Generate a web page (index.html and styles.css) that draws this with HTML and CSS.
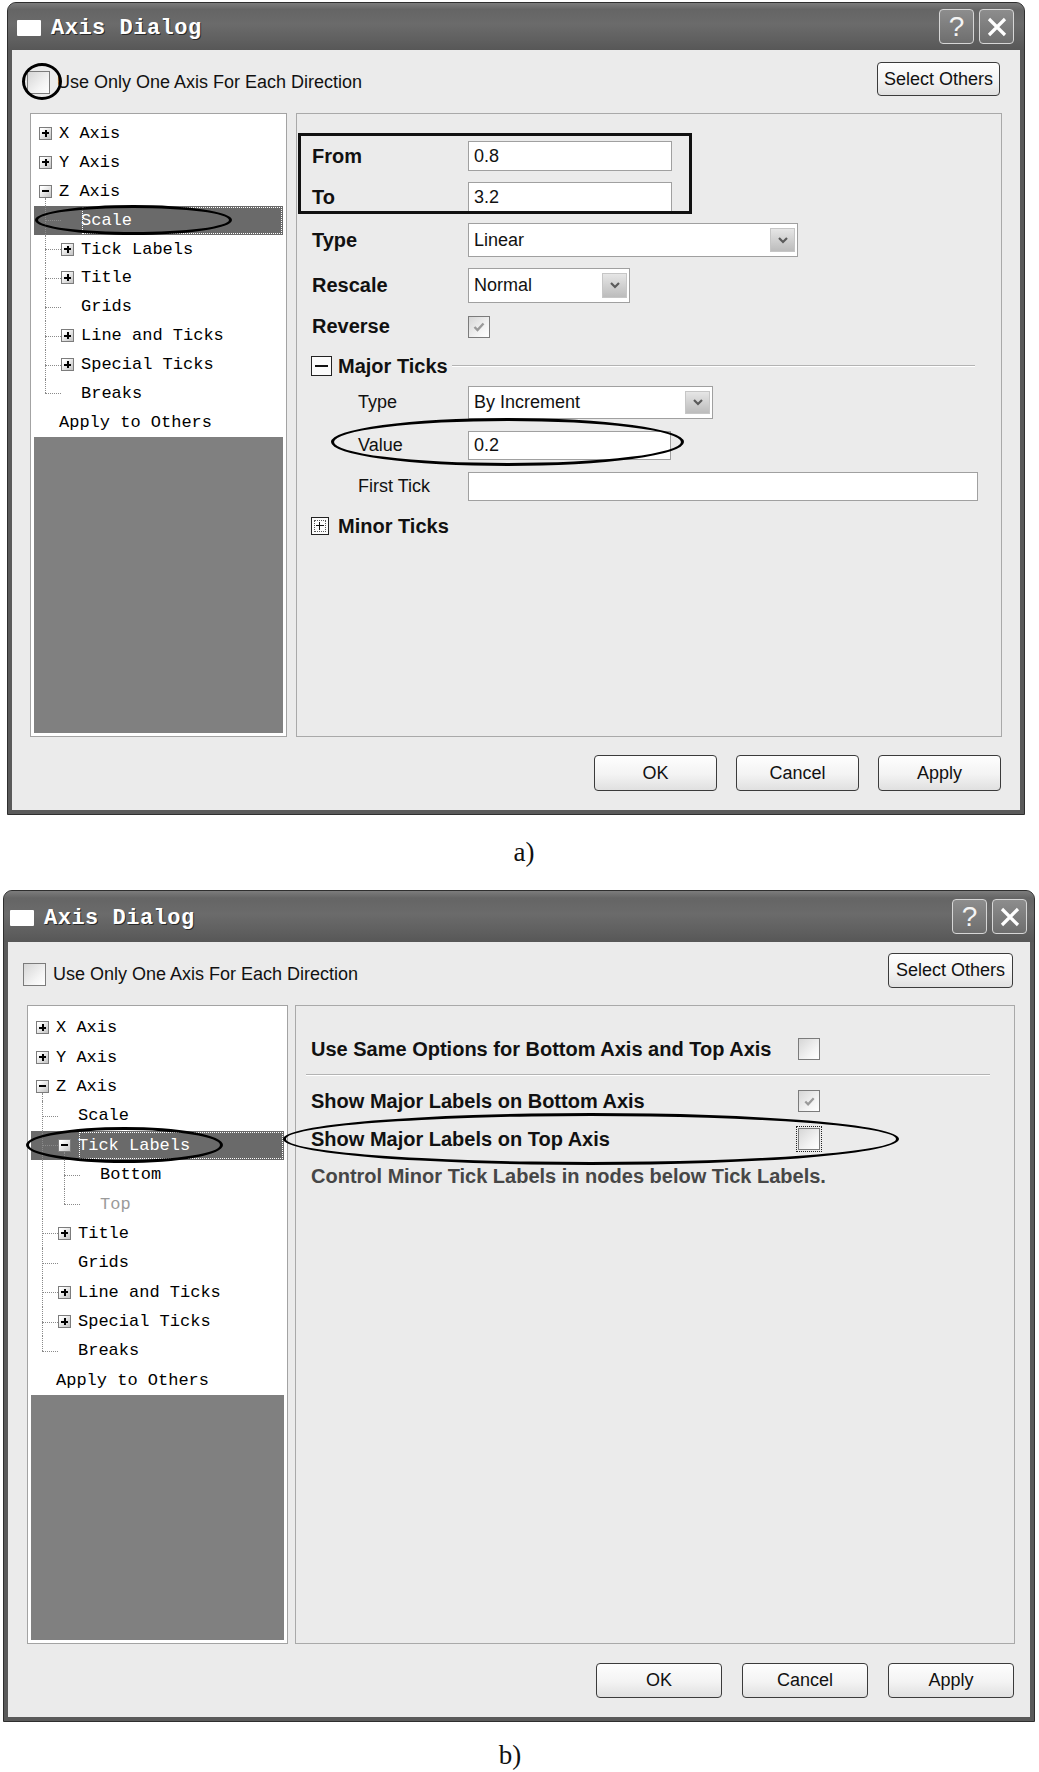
FILE: index.html
```html
<!DOCTYPE html>
<html lang="en">
<head>
    <meta charset="UTF-8">
    <meta name="viewport" content="width=device-width, initial-scale=1.0">
    <title>Axis Dialog</title>
    <link rel="stylesheet" href="styles.css">
</head>
<body>
<div class="figure">

    <!-- a) Scale page -->
    <div class="dialog dialog-a">
        <div class="titlebar">
            <span class="app-icon"></span>
            <span class="title">Axis Dialog</span>
            <div class="caption-buttons">
                <span class="cap-btn">?</span>
                <span class="cap-btn"><svg width="22" height="22" viewBox="0 0 22 22"><path d="M3 3 L19 19 M19 3 L3 19" stroke="#fff" stroke-width="3.2" fill="none"/></svg></span>
            </div>
        </div>
        <div class="client">
            <div class="top-row">
                <div class="check-label"><span class="checkbox"></span>Use Only One Axis For Each Direction</div>
                <button class="btn select-others">Select Others</button>
                <span class="mark circle-a"></span>
            </div>
            <div class="main">
                <div class="tree">
                    <div class="node l0"><span class="tg plus"></span>X Axis</div>
                    <div class="node l0"><span class="tg plus"></span>Y Axis</div>
                    <div class="node l0 open"><span class="tg minus"></span>Z Axis</div>
                    <div class="node l1 selected"><span class="tg none"></span><span class="txt">Scale</span></div>
                    <div class="node l1"><span class="tg plus"></span>Tick Labels</div>
                    <div class="node l1"><span class="tg plus"></span>Title</div>
                    <div class="node l1"><span class="tg none"></span>Grids</div>
                    <div class="node l1"><span class="tg plus"></span>Line and Ticks</div>
                    <div class="node l1"><span class="tg plus"></span>Special Ticks</div>
                    <div class="node l1 end"><span class="tg none"></span>Breaks</div>
                    <div class="node l0"><span class="tg none"></span>Apply to Others</div>
                    <div class="tree-fill"></div>
                    <span class="mark ellipse-scale"></span>
                </div>
                <div class="panel">
                    <div class="form">
                        <div class="row">
                            <span class="lbl">From</span>
                            <div class="field w-from">0.8</div>
                        </div>
                        <div class="row r-to">
                            <span class="lbl">To</span>
                            <div class="field w-from">3.2</div>
                        </div>
                        <div class="row r-type">
                            <span class="lbl">Type</span>
                            <div class="field select w-type">Linear<span class="drop"><svg width="12" height="9" viewBox="0 0 12 9"><path d="M2 2 L6 6 L10 2" stroke="#5a5a5a" stroke-width="2.2" fill="none"/></svg></span></div>
                        </div>
                        <div class="row r-rescale">
                            <span class="lbl">Rescale</span>
                            <div class="field select w-rescale">Normal<span class="drop"><svg width="12" height="9" viewBox="0 0 12 9"><path d="M2 2 L6 6 L10 2" stroke="#5a5a5a" stroke-width="2.2" fill="none"/></svg></span></div>
                        </div>
                        <div class="row r-reverse">
                            <span class="lbl">Reverse</span>
                            <span class="checkbox"><svg width="16" height="16" viewBox="0 0 16 16"><path d="M3.5 8 L6.5 11 L12.5 4.5" stroke="#9a9a9a" stroke-width="2.4" fill="none"/></svg></span>
                        </div>
                        <div class="group-head">
                            <span class="gbox minus"></span>
                            <span class="gtitle">Major Ticks</span>
                            <span class="gline"></span>
                        </div>
                        <div class="row sub r-subtype">
                            <span class="lbl">Type</span>
                            <div class="field select w-subtype">By Increment<span class="drop"><svg width="12" height="9" viewBox="0 0 12 9"><path d="M2 2 L6 6 L10 2" stroke="#5a5a5a" stroke-width="2.2" fill="none"/></svg></span></div>
                        </div>
                        <div class="row sub r-value">
                            <span class="lbl">Value</span>
                            <div class="field w-value">0.2</div>
                        </div>
                        <div class="row sub r-first">
                            <span class="lbl">First Tick</span>
                            <div class="field w-first"></div>
                        </div>
                        <div class="group-head minor-head">
                            <span class="gbox small plus"></span>
                            <span class="gtitle">Minor Ticks</span>
                        </div>
                    </div>
                    <span class="rect-mark"></span>
                    <span class="mark ellipse-value"></span>
                </div>
            </div>
            <div class="footer">
                <button class="btn">OK</button>
                <button class="btn">Cancel</button>
                <button class="btn">Apply</button>
            </div>
        </div>
    </div>
    <div class="fig-caption cap-a">a)</div>

    <!-- b) Tick Labels page -->
    <div class="dialog dialog-b">
        <div class="titlebar">
            <span class="app-icon"></span>
            <span class="title">Axis Dialog</span>
            <div class="caption-buttons">
                <span class="cap-btn">?</span>
                <span class="cap-btn"><svg width="22" height="22" viewBox="0 0 22 22"><path d="M3 3 L19 19 M19 3 L3 19" stroke="#fff" stroke-width="3.2" fill="none"/></svg></span>
            </div>
        </div>
        <div class="client">
            <div class="top-row">
                <div class="check-label"><span class="checkbox"></span>Use Only One Axis For Each Direction</div>
                <button class="btn select-others">Select Others</button>
            </div>
            <div class="main">
                <div class="tree">
                    <div class="node l0"><span class="tg plus"></span>X Axis</div>
                    <div class="node l0"><span class="tg plus"></span>Y Axis</div>
                    <div class="node l0 open"><span class="tg minus"></span>Z Axis</div>
                    <div class="node l1"><span class="tg none"></span>Scale</div>
                    <div class="node l1 open selected"><span class="tg minus"></span><span class="txt">Tick Labels</span></div>
                    <div class="node l2"><i class="rail"></i><span class="tg none"></span>Bottom</div>
                    <div class="node l2 end"><i class="rail"></i><span class="tg none"></span><span class="dim">Top</span></div>
                    <div class="node l1"><span class="tg plus"></span>Title</div>
                    <div class="node l1"><span class="tg none"></span>Grids</div>
                    <div class="node l1"><span class="tg plus"></span>Line and Ticks</div>
                    <div class="node l1"><span class="tg plus"></span>Special Ticks</div>
                    <div class="node l1 end"><span class="tg none"></span>Breaks</div>
                    <div class="node l0"><span class="tg none"></span>Apply to Others</div>
                    <div class="tree-fill"></div>
                    <span class="mark ellipse-tick"></span>
                </div>
                <div class="panel">
                    <div class="opts">
                        <div class="opt-row">
                            <span class="opt-lbl">Use Same Options for Bottom Axis and Top Axis</span>
                            <span class="checkbox small"></span>
                        </div>
                        <div class="sep"></div>
                        <div class="opt-row r-bottom">
                            <span class="opt-lbl">Show Major Labels on Bottom Axis</span>
                            <span class="checkbox small"><svg width="15" height="15" viewBox="0 0 16 16"><path d="M3.5 8 L6.5 11 L12.5 4.5" stroke="#9a9a9a" stroke-width="2.4" fill="none"/></svg></span>
                        </div>
                        <div class="opt-row r-top">
                            <span class="opt-lbl">Show Major Labels on Top Axis</span>
                            <span class="checkbox small focus"></span>
                        </div>
                        <div class="opt-row info">Control Minor Tick Labels in nodes below Tick Labels.</div>
                    </div>
                    <span class="mark ellipse-top"></span>
                </div>
            </div>
            <div class="footer">
                <button class="btn">OK</button>
                <button class="btn">Cancel</button>
                <button class="btn">Apply</button>
            </div>
        </div>
    </div>
    <div class="fig-caption cap-b">b)</div>

</div>
</body>
</html>
```

FILE: styles.css
```css
* {
    box-sizing: border-box;
}

body {
    margin: 0;
    background-color: #fff;
    font-family: "Liberation Sans", Arial, sans-serif;
    font-size: 18px;
    color: #111;
}

.figure {
    width: 1039px;
}

/* window frame */
.dialog {
    position: relative;
    border: 1px solid #2e2e2e;
    border-radius: 9px 9px 0 0;
    background-color: #5a5a5a;
    padding: 0 4px 4px;
}

.dialog-a {
    width: 1018px;
    margin: 2px 0 0 7px;
}

.dialog-b {
    width: 1032px;
    margin: 0 0 0 3px;
}

.titlebar {
    display: flex;
    align-items: center;
    margin: 0 -4px;
    border-radius: 8px 8px 0 0;
    background: linear-gradient(#7c7c7c, #656565 14%, #6b6b6b 45%, #5f5f5f 80%, #575757);
}

.dialog-a .titlebar {
    height: 47px;
    padding: 0 10px 0 9px;
}

.dialog-b .titlebar {
    height: 51px;
    padding: 0 7px 0 6px;
}

.app-icon {
    width: 24px;
    height: 16px;
    background-color: #fff;
    border-radius: 1px;
    margin-top: 2px;
}

.title {
    margin-left: 10px;
    margin-top: 4px;
    font-family: "Liberation Mono", monospace;
    font-weight: bold;
    font-size: 22px;
    letter-spacing: 0.5px;
    color: #fff;
    text-shadow: 1px 1px 0 #2a2a2a;
}

.caption-buttons {
    margin-left: auto;
    display: flex;
    gap: 5px;
}

.cap-btn {
    width: 35px;
    height: 35px;
    border: 1px solid #d6d6d6;
    border-radius: 4px;
    background: linear-gradient(#8d8d8d, #6e6e6e);
    display: flex;
    align-items: center;
    justify-content: center;
    color: #f4f4f4;
    font-size: 28px;
}

.client {
    background-color: #ebebeb;
}

.dialog-a .client {
    padding: 12px 18px 19px;
}

.dialog-b .client {
    padding: 11px 15px 19px 19px;
}

.top-row {
    position: relative;
    display: flex;
    align-items: center;
    justify-content: space-between;
}

.dialog-a .top-row {
    height: 34px;
    margin: 0 2px 0 -3px;
}

.dialog-b .top-row {
    height: 35px;
    margin: 0 2px 0 -4px;
}

.check-label {
    display: flex;
    align-items: center;
    gap: 7px;
    margin-top: 7px;
}

.checkbox {
    width: 23px;
    height: 23px;
    flex: none;
    border: 1px solid #7b7b7b;
    background: linear-gradient(135deg, #d6d6d6, #f4f4f4 65%, #fff);
    display: flex;
    align-items: center;
    justify-content: center;
}

.checkbox.small {
    width: 22px;
    height: 22px;
}

.checkbox.focus {
    outline: 1px dotted #222;
    outline-offset: 1px;
}

.btn {
    font-family: "Liberation Sans", Arial, sans-serif;
    font-size: 18px;
    color: #111;
    background: linear-gradient(#fefefe, #f3f3f3 55%, #e0e0e0);
    border: 1px solid #3b3b3b;
    border-radius: 4px;
    padding: 0;
}

.dialog-a .select-others {
    width: 123px;
    height: 34px;
}

.dialog-b .select-others {
    width: 125px;
    height: 35px;
}

/* main area */
.main {
    display: flex;
    margin-top: 17px;
}

.dialog-a .main {
    height: 624px;
    gap: 9px;
}

.dialog-b .main {
    height: 639px;
    gap: 7px;
}

.tree {
    position: relative;
    display: flex;
    flex-direction: column;
    background-color: #fff;
    border: 1px solid #a3a3a3;
    padding: 5px 3px 3px;
}

.dialog-a .tree {
    width: 257px;
}

.dialog-b .tree {
    width: 261px;
    padding-top: 7px;
}

.tree-fill {
    flex: 1;
    background-color: #808080;
}

.node {
    position: relative;
    display: flex;
    align-items: center;
    gap: 7px;
    flex: none;
    font-family: "Liberation Mono", monospace;
    font-size: 17px;
    color: #000;
    white-space: pre;
}

.dialog-a .node {
    height: 28.9px;
}

.dialog-b .node {
    height: 29.4px;
}

.l0 {
    padding-left: 5px;
}

.l1 {
    padding-left: 27px;
}

.l2 {
    padding-left: 49px;
}

.tg {
    position: relative;
    width: 13px;
    height: 13px;
    flex: none;
    border: 1px solid #7c7c7c;
    background: linear-gradient(135deg, #fff 15%, #c2c2c2);
}

.tg.none {
    border: 0;
    background: none;
}

.tg.plus::before,
.tg.minus::before {
    content: "";
    position: absolute;
    left: 2px;
    right: 2px;
    top: 4.5px;
    height: 2px;
    background-color: #000;
}

.tg.plus::after {
    content: "";
    position: absolute;
    top: 2px;
    bottom: 2px;
    left: 4.5px;
    width: 2px;
    background-color: #000;
}

.open > .tg::after {
    content: "";
    position: absolute;
    left: 5px;
    top: 100%;
    margin-top: 1px;
    height: 8px;
    border-left: 1px dotted #8a8a8a;
}

.l1::before,
.l2::before,
.rail {
    content: "";
    position: absolute;
    top: 0;
    bottom: 0;
    left: 11px;
    border-left: 1px dotted #8a8a8a;
}

.l2::before {
    left: 33px;
}

.end::before {
    bottom: 50%;
}

.l1::after,
.l2::after {
    content: "";
    position: absolute;
    left: 11px;
    top: 50%;
    width: 16px;
    border-top: 1px dotted #8a8a8a;
}

.l2::after {
    left: 33px;
}

.node.selected {
    background-color: #6a6a6a;
    color: #fff;
}

.selected .txt {
    flex: 1;
    align-self: stretch;
    display: flex;
    align-items: center;
    outline: 1px dotted #fff;
    outline-offset: -2px;
}

.dim {
    color: #9a9a9a;
}

/* hand drawn marks over the screenshot */
.mark {
    position: absolute;
    border: 3px solid #000;
    border-radius: 50%;
    pointer-events: none;
}

.circle-a {
    left: -5px;
    top: 1px;
    width: 40px;
    height: 37px;
}

.ellipse-scale {
    left: 4px;
    top: 91px;
    width: 197px;
    height: 30px;
}

.ellipse-tick {
    left: -2px;
    top: 121px;
    width: 197px;
    height: 36px;
}

.ellipse-value {
    left: 34px;
    top: 304px;
    width: 353px;
    height: 48px;
}

.ellipse-top {
    left: -13px;
    top: 107px;
    width: 616px;
    height: 52px;
    z-index: 2;
}

.rect-mark {
    position: absolute;
    left: 1px;
    top: 19px;
    width: 394px;
    height: 81px;
    border: 3px solid #111;
}

/* right panel */
.panel {
    position: relative;
    flex: 1;
    border: 1px solid #a9a9a9;
}

.form {
    padding: 27px 0 0 15px;
}

.row {
    display: flex;
    align-items: center;
}

.lbl {
    width: 156px;
    flex: none;
    font-weight: bold;
    font-size: 20px;
}

.row.sub .lbl {
    font-weight: normal;
    font-size: 18px;
    padding-left: 46px;
}

.field {
    height: 30px;
    background-color: #fff;
    border: 1px solid #a0a0a0;
    padding-left: 5px;
    display: flex;
    align-items: center;
}

.select {
    justify-content: space-between;
}

.drop {
    width: 25px;
    align-self: stretch;
    margin: 4px 2px;
    background: linear-gradient(#e6e6e6, #bcbcbc);
    border: 1px solid #c6c6c6;
    display: flex;
    align-items: center;
    justify-content: center;
}

.w-from {
    width: 204px;
}

.w-type {
    width: 330px;
    height: 34px;
}

.w-rescale {
    width: 162px;
    height: 35px;
}

.w-subtype {
    width: 245px;
    height: 33px;
}

.w-value {
    width: 203px;
    height: 29px;
}

.w-first {
    width: 510px;
    height: 29px;
}

.r-to,
.r-type,
.r-rescale {
    margin-top: 11px;
}

.r-reverse {
    margin-top: 12px;
}

.r-reverse .checkbox {
    width: 22px;
    height: 22px;
}

.r-subtype {
    margin-top: 10px;
}

.r-value,
.r-first {
    margin-top: 12px;
}

.group-head {
    display: flex;
    align-items: center;
    height: 20px;
    margin-top: 18px;
    margin-left: -1px;
}

.minor-head {
    margin-top: 15px;
}

.gbox {
    position: relative;
    width: 21px;
    height: 20px;
    flex: none;
    border: 1px solid #222;
    background-color: #fbfbfb;
}

.gbox::before {
    content: "";
    position: absolute;
    left: 3px;
    right: 3px;
    top: 8px;
    height: 2px;
    background-color: #111;
}

.gbox.small {
    width: 18px;
    height: 18px;
    margin-right: 3px;
    outline: 1px dotted #555;
    outline-offset: -4px;
}

.gbox.small::before {
    left: 4px;
    right: 4px;
    top: 7px;
    height: 1px;
}

.gbox.plus::after {
    content: "";
    position: absolute;
    top: 4px;
    bottom: 4px;
    left: 7px;
    width: 1px;
    background-color: #111;
}

.gtitle {
    margin-left: 6px;
    font-weight: bold;
    font-size: 20px;
}

.gline {
    flex: 1;
    height: 2px;
    border-top: 1px solid #b3b3b3;
    border-bottom: 1px solid #fff;
    margin: 0 26px 0 4px;
}

/* tick labels page */
.opts {
    padding: 31px 24px 0 15px;
}

.opt-row {
    display: flex;
    align-items: center;
    height: 24px;
    font-weight: bold;
    font-size: 20px;
}

.opt-lbl {
    width: 487px;
    flex: none;
}

.sep {
    margin: 13px 0 0 -5px;
    height: 2px;
    border-top: 1px solid #b3b3b3;
    border-bottom: 1px solid #fff;
}

.r-bottom {
    margin-top: 13px;
}

.r-top {
    margin-top: 14px;
}

.info {
    margin-top: 13px;
    color: #464646;
}

/* bottom buttons */
.footer {
    display: flex;
    justify-content: flex-end;
    margin-right: 1px;
}

.dialog-a .footer {
    margin-top: 18px;
    gap: 19px;
}

.dialog-a .footer .btn {
    width: 123px;
    height: 36px;
}

.dialog-b .footer {
    margin-top: 19px;
    gap: 20px;
}

.dialog-b .footer .btn {
    width: 126px;
    height: 35px;
}

.fig-caption {
    font-family: "Liberation Serif", "Times New Roman", serif;
    font-size: 27px;
    text-align: center;
    color: #111;
}

.cap-a {
    height: 75px;
    line-height: 75px;
    padding-left: 9px;
}

.cap-b {
    margin-top: 18px;
    height: 30px;
    line-height: 30px;
    padding-right: 19px;
}
```
